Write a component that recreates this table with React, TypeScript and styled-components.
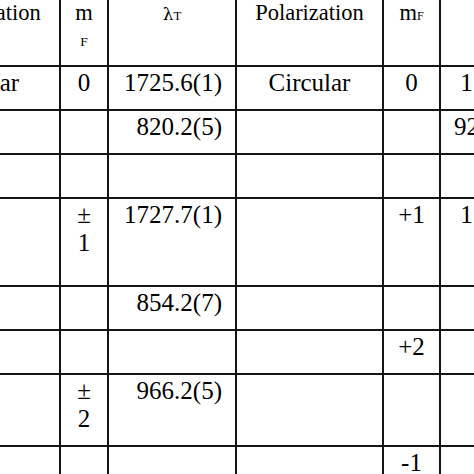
import styled, { createGlobalStyle } from 'styled-components'

const GlobalStyle = createGlobalStyle`
  html, body {
    margin: 0;
    padding: 0;
    background: #ffffff;
    overflow: hidden;
  }
`

const Table = styled.table`
  border-collapse: collapse;
  table-layout: fixed;
  width: 580px;
  margin: -2px 0 0 -88px;
  font-family: "Liberation Serif", "Times New Roman", serif;
  color: #000000;
`

const Col = styled.col<{ $w: number }>`
  width: ${(p) => p.$w}px;
`

const Row = styled.tr<{ $h: number }>`
  height: ${(p) => p.$h}px;
`

const HeadCell = styled.th`
  border: 2px solid #151515;
  padding: 0;
  vertical-align: top;
  text-align: center;
  font-size: 22.5px;
  font-weight: normal;
  line-height: 1.15;
`

const Cell = styled.td<{ $align?: 'center' | 'right' }>`
  border: 2px solid #151515;
  padding: 2px ${(p) => (p.$align === 'right' ? '13px' : '0')} 0 0;
  vertical-align: top;
  text-align: ${(p) => p.$align ?? 'center'};
  font-size: 25px;
  line-height: 1.1;
  white-space: pre-line;
  overflow: hidden;
`

const Sub = styled.span<{ $size: number }>`
  font-size: ${(p) => p.$size}px;
`

const Lambda = styled.span`
  font-family: "DejaVu Serif", "Liberation Serif", serif;
  font-size: 17px;
`

const widths = [147, 48, 128, 147, 57, 53]
const aligns: ('center' | 'right')[] = ['center', 'center', 'right', 'center', 'center', 'center']

const rows = [
  { h: 44, cells: ['Linear', '0', '1725.6(1)', 'Circular', '0', '1'] },
  { h: 44, cells: ['', '', '820.2(5)', '', '', '92'] },
  { h: 44, cells: ['', '', '', '', '', ''] },
  { h: 88, cells: ['', '±\n1', '1727.7(1)', '', '+1', '1'] },
  { h: 44, cells: ['', '', '854.2(7)', '', '', ''] },
  { h: 44, cells: ['', '', '', '', '+2', ''] },
  { h: 72, cells: ['', '±\n2', '966.2(5)', '', '', ''] },
  { h: 44, cells: ['', '', '', '', '-1', ''] },
]

export default function App() {
  return (
    <>
      <GlobalStyle />
      <Table>
        <colgroup>
          {widths.map((w, i) => (
            <Col key={i} $w={w} />
          ))}
        </colgroup>
        <thead>
          <Row $h={67}>
            <HeadCell>Polarization</HeadCell>
            <HeadCell>
              m
              <br />
              <Sub $size={13.5}>F</Sub>
            </HeadCell>
            <HeadCell>
              <Lambda>λ</Lambda>
              <Sub $size={13}>T</Sub>
            </HeadCell>
            <HeadCell>Polarization</HeadCell>
            <HeadCell>
              m<Sub $size={12}>F</Sub>
            </HeadCell>
            <HeadCell />
          </Row>
        </thead>
        <tbody>
          {rows.map((row, r) => (
            <Row key={r} $h={row.h}>
              {row.cells.map((text, c) => (
                <Cell key={c} $align={aligns[c]}>
                  {text}
                </Cell>
              ))}
            </Row>
          ))}
        </tbody>
      </Table>
    </>
  )
}
